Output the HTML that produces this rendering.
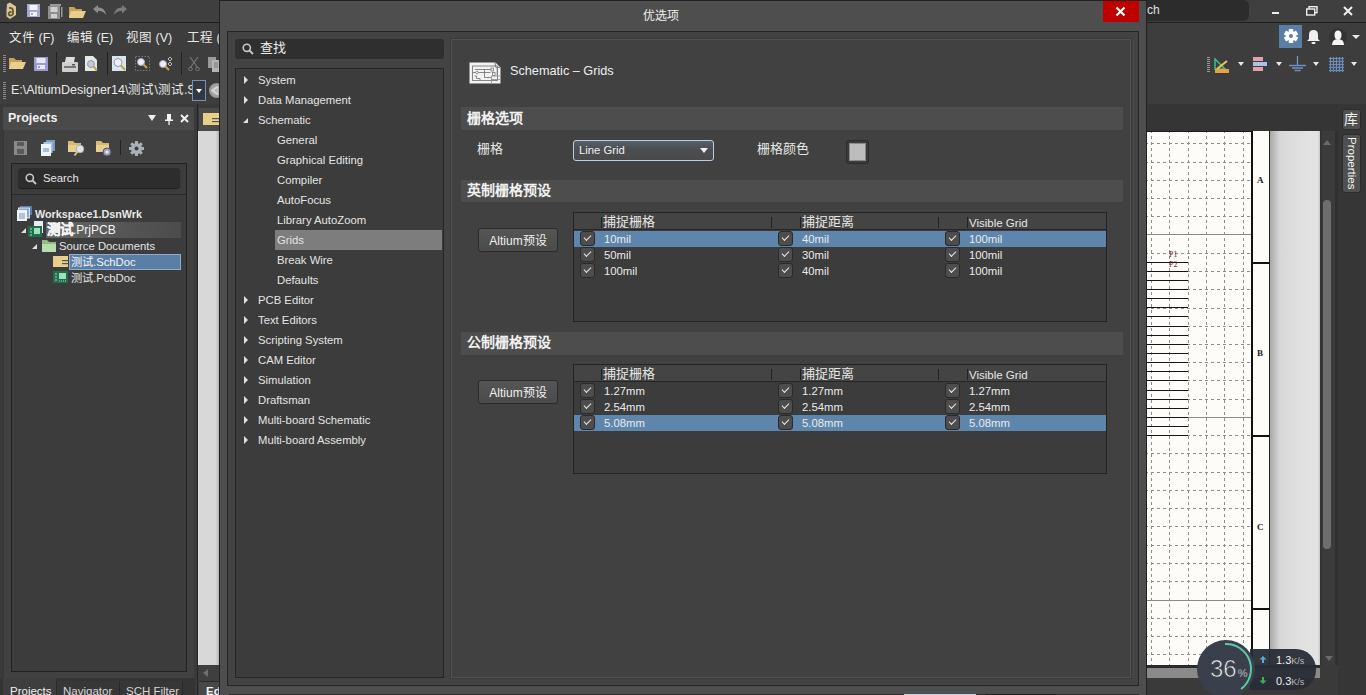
<!DOCTYPE html><html lang="zh-CN"><head><meta charset="utf-8"><style>
*{margin:0;padding:0;box-sizing:border-box}
html,body{width:1366px;height:695px;overflow:hidden;background:#3a3a3a;font-family:"Liberation Sans",sans-serif;color:#e8e8e8}
.a{position:absolute}
.t{position:absolute;white-space:nowrap;font-size:12px;line-height:14px}
.tri-r{width:0;height:0;border-top:4px solid transparent;border-bottom:4px solid transparent;border-left:4px solid #e0e0e0}
.tri-d{width:0;height:0;border-left:5px solid transparent;border-bottom:5px solid #e0e0e0}
.tr{font-size:11.3px;color:#e4e4e4}
.sec{position:absolute;left:461px;width:662px;height:23px;background:#4d4d4d}
.sect{position:absolute;left:467px;font-size:14px;font-weight:bold;color:#f2f2f2;line-height:16px;white-space:nowrap}
.btn{position:absolute;left:478px;width:80px;height:24px;background:linear-gradient(#555,#4a4a4a);border:1px solid #2c2c2c;border-radius:3px;font-size:12px;color:#f0f0f0;text-align:center;line-height:24px}
.tbl{position:absolute;left:573px;width:534px;height:110px;background:#3c3c3c;border:1px solid #232323}
.cb{position:absolute;width:15px;height:15px;background:#4d4d4d;border:1px solid #2a2a2a;border-radius:3px}
.cell{position:absolute;font-size:11.3px;color:#eaeaea;white-space:nowrap;line-height:14px}
.hd{position:absolute;font-size:13px;color:#e6e6e6;white-space:nowrap;line-height:16px}
.car{position:absolute;width:0;height:0;border-left:4px solid transparent;border-right:4px solid transparent;border-top:4px solid #e8e8e8}
</style></head><body>
<div class="a" style="left:0;top:0;width:1366px;height:22px;background:#3f3f3f"></div>
<div class="a" style="left:0;top:21.5px;width:1366px;height:1.5px;background:#1e1e1e"></div>
<div class="a" style="left:0;top:23px;width:1366px;height:81px;background:#3d3d3d"></div>
<svg class="a" style="left:5px;top:2px;" width="12" height="18" viewBox="0 0 12 18"><path d="M2 2 L5 0.5 L11 4.5 L11 13 L5 17 L1.5 14.5 L1.5 9 Z" fill="#d8c89c"/><path d="M4 6 Q8 5.5 8 9 L8 12 Q6 14.5 4 13 Q3 11 5 10 L6.5 10" fill="none" stroke="#6a5828" stroke-width="1.8"/></svg>
<svg class="a" style="left:27px;top:4px;" width="13" height="13" viewBox="0 0 13 13"><rect x="0" y="0" width="13" height="13" fill="#a8a8d6"/><rect x="2.5" y="1" width="8" height="5" fill="#f4f4ff"/><rect x="3" y="8" width="7" height="4" fill="#f4f4ff"/><rect x="4" y="9" width="2" height="2" fill="#a8a8d6"/></svg>
<svg class="a" style="left:48px;top:4px;" width="15" height="15" viewBox="0 0 15 15"><rect x="2" y="0" width="11" height="2" fill="#9a9a9a"/><rect x="0" y="2" width="12" height="13" fill="#8f8f8f"/><rect x="2.5" y="3" width="7" height="5" fill="#cfcfcf"/><rect x="3" y="10" width="6" height="4" fill="#cfcfcf"/><rect x="13" y="3" width="1.5" height="10" fill="#999"/></svg>
<svg class="a" style="left:69px;top:5px;" width="17" height="14" viewBox="0 0 17 14"><path d="M0 2 L5 2 L7 4 L13 4 L13 13 L0 13 Z" fill="#c7a35a"/><path d="M2 6 L17 6 L14 13 L0 13 Z" fill="#e9cf8a"/></svg>
<svg class="a" style="left:92px;top:5px;" width="15" height="11" viewBox="0 0 15 11"><path d="M1 4 L6 0 L6 2.5 Q13 2 14 10 Q11 5.5 6 6 L6 8.5 Z" fill="#8c8c8c"/></svg>
<svg class="a" style="left:113px;top:5px;" width="15" height="11" viewBox="0 0 15 11"><path d="M14 4 L9 0 L9 2.5 Q2 2 1 10 Q4 5.5 9 6 L9 8.5 Z" fill="#7a7a7a"/></svg>
<div class="t" style="left:9px;top:30.5px;font-size:12.5px;color:#e8e8e8">文件 (F)</div>
<div class="t" style="left:67px;top:30.5px;font-size:12.5px;color:#e8e8e8">编辑 (E)</div>
<div class="t" style="left:126px;top:30.5px;font-size:12.5px;color:#e8e8e8">视图 (V)</div>
<div class="t" style="left:187px;top:30.5px;font-size:12.5px;color:#e8e8e8">工程 (</div>
<div class="a" style="left:3px;top:55px;width:3px;height:1px;background:#8a8a8a"></div>
<div class="a" style="left:3px;top:57px;width:3px;height:1px;background:#8a8a8a"></div>
<div class="a" style="left:3px;top:59px;width:3px;height:1px;background:#8a8a8a"></div>
<div class="a" style="left:3px;top:61px;width:3px;height:1px;background:#8a8a8a"></div>
<div class="a" style="left:3px;top:63px;width:3px;height:1px;background:#8a8a8a"></div>
<div class="a" style="left:3px;top:65px;width:3px;height:1px;background:#8a8a8a"></div>
<div class="a" style="left:3px;top:67px;width:3px;height:1px;background:#8a8a8a"></div>
<div class="a" style="left:3px;top:69px;width:3px;height:1px;background:#8a8a8a"></div>
<div class="a" style="left:3px;top:71px;width:3px;height:1px;background:#8a8a8a"></div>
<svg class="a" style="left:9px;top:56px;" width="17" height="15" viewBox="0 0 17 15"><path d="M0 2 L5 2 L7 4 L13 4 L13 13 L0 13 Z" fill="#c7a35a"/><path d="M2 6 L17 6 L14 13 L0 13 Z" fill="#e9cf8a"/></svg>
<svg class="a" style="left:34px;top:57px;" width="14" height="14" viewBox="0 0 14 14"><rect x="0" y="0" width="14" height="14" fill="#9a9ad0"/><rect x="2.5" y="1" width="9" height="5" fill="#e8e8f8"/><rect x="3" y="8" width="8" height="4" fill="#e8e8f8"/><rect x="4" y="9" width="2" height="2" fill="#9a9ad0"/></svg>
<div class="a" style="left:56px;top:52px;width:1px;height:23px;background:#222"></div>
<svg class="a" style="left:62px;top:57px;" width="16" height="15" viewBox="0 0 16 15"><path d="M4 0 L13 0 L12 5 L3 5 Z" fill="#ddd"/><rect x="0" y="5" width="16" height="10" rx="1" fill="#cfcfcf"/><rect x="2" y="9" width="12" height="2" fill="#777"/><rect x="10" y="7" width="3" height="1.5" fill="#555"/></svg>
<svg class="a" style="left:85px;top:56px;" width="13" height="16" viewBox="0 0 13 16"><path d="M0 0 L8 0 L12 4 L12 15 L0 15 Z" fill="#e8e8e8"/><circle cx="6" cy="8" r="3.5" fill="#bcd" stroke="#999"/><path d="M8.5 10.5 L12 14.5" stroke="#c9a050" stroke-width="2"/></svg>
<div class="a" style="left:107px;top:52px;width:1px;height:23px;background:#222"></div>
<svg class="a" style="left:112px;top:56px;" width="16" height="16" viewBox="0 0 16 16"><rect x="0" y="0" width="14" height="15" fill="#d8e6f2"/><circle cx="6" cy="6.5" r="4" fill="#eef" stroke="#999"/><path d="M9 9.5 L13 14" stroke="#c9a050" stroke-width="2"/></svg>
<svg class="a" style="left:135px;top:56px;" width="15" height="16" viewBox="0 0 15 16"><rect x="0.5" y="0.5" width="14" height="14" fill="none" stroke="#777" stroke-dasharray="1.5 1.5"/><circle cx="6" cy="6" r="3.5" fill="#eef" stroke="#aaa"/><path d="M8.5 8.5 L12 12" stroke="#c9a050" stroke-width="2"/></svg>
<svg class="a" style="left:158px;top:56px;" width="16" height="16" viewBox="0 0 16 16"><circle cx="5" cy="8" r="3.5" fill="#eef" stroke="#aaa"/><path d="M7.5 10.5 L11 14" stroke="#c9a050" stroke-width="2"/><path d="M12 1 l2 2 l-2 2 l-2 -2 Z M12 6 l2 2 l-2 2 l-2 -2 Z" fill="none" stroke="#ddd" stroke-width="0.8"/></svg>
<div class="a" style="left:181px;top:52px;width:1px;height:23px;background:#222"></div>
<svg class="a" style="left:188px;top:57px;" width="13" height="14" viewBox="0 0 13 14"><path d="M2 0 L10 11 M10 0 L2 11" stroke="#777" stroke-width="1.2"/><circle cx="2.5" cy="12" r="1.8" fill="none" stroke="#777"/><circle cx="9.5" cy="12" r="1.8" fill="none" stroke="#777"/></svg>
<svg class="a" style="left:208px;top:57px;" width="12" height="15" viewBox="0 0 12 15"><rect x="0" y="0" width="8" height="11" fill="#9a9a9a"/><rect x="4" y="3" width="8" height="12" fill="#b5b5b5"/><path d="M6 6 h4 M6 8 h4 M6 10 h4" stroke="#777"/></svg>
<div class="a" style="left:3px;top:82px;width:3px;height:1px;background:#8a8a8a"></div>
<div class="a" style="left:3px;top:84px;width:3px;height:1px;background:#8a8a8a"></div>
<div class="a" style="left:3px;top:86px;width:3px;height:1px;background:#8a8a8a"></div>
<div class="a" style="left:3px;top:88px;width:3px;height:1px;background:#8a8a8a"></div>
<div class="a" style="left:3px;top:90px;width:3px;height:1px;background:#8a8a8a"></div>
<div class="a" style="left:3px;top:92px;width:3px;height:1px;background:#8a8a8a"></div>
<div class="a" style="left:3px;top:94px;width:3px;height:1px;background:#8a8a8a"></div>
<div class="a" style="left:3px;top:96px;width:3px;height:1px;background:#8a8a8a"></div>
<div class="a" style="left:3px;top:98px;width:3px;height:1px;background:#8a8a8a"></div>
<div class="t" style="left:11px;top:83px;font-size:12.5px;color:#e6e6e6">E:\AltiumDesigner14\测试\测试.S</div>
<div class="a" style="left:192px;top:80px;width:14px;height:21px;background:#323842;border:1px solid #7592b0"></div>
<div class="car" style="left:196px;top:89px;border-left-width:3.5px;border-right-width:3.5px;border-top-width:4px;border-top-color:#fff"></div>
<div class="a" style="left:209px;top:83px;width:15px;height:15px;border-radius:50%;background:radial-gradient(circle,#b8b8b8 20%,#9a9a9a 60%,#7a7a7a)"></div>
<svg class="a" style="left:211px;top:86px;" width="8" height="9" viewBox="0 0 8 9"><path d="M7 0.5 L1 4.5 L7 8.5" fill="none" stroke="#d8d8d8" stroke-width="1.6"/></svg>
<div class="a" style="left:0;top:104px;width:197px;height:591px;background:#3a3a3a"></div>
<div class="a" style="left:3px;top:107px;width:191px;height:23px;background:#4a4a4a"></div>
<div class="t" style="left:8px;top:111px;font-size:12.5px;font-weight:bold;color:#f0f0f0">Projects</div>
<div class="car" style="left:148px;top:115px;border-left-width:4px;border-right-width:4px;border-top-width:6px;border-top-color:#eee"></div>
<svg class="a" style="left:165px;top:114px;" width="8" height="11" viewBox="0 0 8 11"><rect x="2" y="0" width="4" height="6" fill="#f4f4f4"/><rect x="0" y="5.5" width="8" height="1.5" fill="#f4f4f4"/><rect x="3.4" y="7" width="1.3" height="4" fill="#f4f4f4"/></svg>
<svg class="a" style="left:180px;top:114px;" width="9" height="9" viewBox="0 0 9 9"><path d="M1 1 L8 8 M8 1 L1 8" stroke="#f0f0f0" stroke-width="2"/></svg>
<div class="a" style="left:3px;top:130px;width:191px;height:551px;background:#414141;border-left:1px solid #353535"></div>
<svg class="a" style="left:14px;top:141px;" width="13" height="14" viewBox="0 0 13 14"><rect x="0" y="0" width="13" height="14" fill="#8a8a8a"/><rect x="3" y="1" width="7" height="4" fill="#5a5a5a"/><rect x="3" y="8" width="7" height="5" fill="#5a5a5a"/></svg>
<svg class="a" style="left:41px;top:140px;" width="15" height="16" viewBox="0 0 15 16"><rect x="5" y="0" width="9" height="11" fill="#7a9ac0"/><rect x="2.5" y="2" width="9" height="11" fill="#aac4e0"/><rect x="0" y="4" width="10" height="12" fill="#eef3fa"/><path d="M2 9 h6 M2 11 h6" stroke="#6b8ab0"/></svg>
<svg class="a" style="left:68px;top:140px;" width="17" height="17" viewBox="0 0 17 17"><path d="M0 1 L5 1 L7 3 L13 3 L13 12 L0 12 Z" fill="#d7b870"/><path d="M0 5 L13 5 L13 12 L0 12 Z" fill="#e8cf8f"/><circle cx="12" cy="9" r="3.8" fill="#dfe6ee" stroke="#aaa"/><path d="M9.5 11.5 L6.5 15.5" stroke="#d6c08a" stroke-width="2"/></svg>
<svg class="a" style="left:96px;top:140px;" width="17" height="17" viewBox="0 0 17 17"><path d="M0 1 L5 1 L7 3 L13 3 L13 12 L0 12 Z" fill="#d7b870"/><path d="M0 5 L13 5 L13 12 L0 12 Z" fill="#e8cf8f"/><circle cx="11" cy="12" r="4" fill="#9aa8bb" stroke="#556"/><circle cx="11" cy="12" r="1.5" fill="#eee"/></svg>
<div class="a" style="left:120px;top:140px;width:1px;height:15px;background:#222"></div>
<svg class="a" style="left:129px;top:141px;" width="15" height="15" viewBox="0 0 15 15"><g transform="translate(7.5,7.5)"><circle r="5.5" fill="#aab0b8"/><rect x="-1.5" y="-7.5" width="3" height="4" fill="#aab0b8" transform="rotate(0)"/><rect x="-1.5" y="-7.5" width="3" height="4" fill="#aab0b8" transform="rotate(45)"/><rect x="-1.5" y="-7.5" width="3" height="4" fill="#aab0b8" transform="rotate(90)"/><rect x="-1.5" y="-7.5" width="3" height="4" fill="#aab0b8" transform="rotate(135)"/><rect x="-1.5" y="-7.5" width="3" height="4" fill="#aab0b8" transform="rotate(180)"/><rect x="-1.5" y="-7.5" width="3" height="4" fill="#aab0b8" transform="rotate(225)"/><rect x="-1.5" y="-7.5" width="3" height="4" fill="#aab0b8" transform="rotate(270)"/><rect x="-1.5" y="-7.5" width="3" height="4" fill="#aab0b8" transform="rotate(315)"/><circle r="2" fill="#3e3e3e"/></g></svg>
<div class="a" style="left:11px;top:163px;width:176px;height:509px;background:#3c3c3c;border:1px solid #222"></div>
<div class="a" style="left:18px;top:168px;width:162px;height:20px;background:#2d2d2d;border-radius:4px;box-shadow:0 1px 1px #1e1e1e"></div>
<svg class="a" style="left:25px;top:173px;" width="12" height="12" viewBox="0 0 12 12"><circle cx="4.8" cy="4.8" r="3.6" fill="none" stroke="#c8c8c8" stroke-width="1.6"/><path d="M7.5 7.5 L11 11" stroke="#c8c8c8" stroke-width="1.8"/></svg>
<div class="t" style="left:43px;top:171px;font-size:11.3px;color:#e6e6e6">Search</div>
<div class="a" style="left:12px;top:194px;width:174px;height:1px;background:#2a2a2a"></div>
<svg class="a" style="left:17px;top:206px;" width="15" height="15" viewBox="0 0 15 15"><rect x="3" y="0" width="12" height="9" fill="#5b7fb0"/><rect x="1.5" y="2" width="11" height="10" fill="#8aaad6" stroke="#dde"/><rect x="0" y="4" width="10" height="11" fill="#eef3fb"/><path d="M2 8 h6 M2 10 h6 M2 12 h6" stroke="#7a8fb0"/></svg>
<div class="t" style="left:35px;top:207px;font-size:10.8px;font-weight:bold;color:#e8e8e8">Workspace1.DsnWrk</div>
<div class="a" style="left:46px;top:222px;width:135px;height:16px;background:linear-gradient(90deg,#666,#555 60%,#4c4c4c)"></div>
<div class="a tri-d" style="left:21px;top:228px"></div>
<svg class="a" style="left:28px;top:221px;" width="17" height="17" viewBox="0 0 17 17"><rect x="6" y="0" width="9" height="12" fill="#e8eef5"/><rect x="0" y="5" width="14" height="11" fill="#1f6f4a"/><path d="M2 8 h2 M2 11 h2 M2 14 h2" stroke="#ccc"/><rect x="6" y="7" width="6" height="6" fill="#9fe0c0"/></svg>
<div class="t" style="left:47px;top:223px;font-size:12px;color:#f4f4f4"><b style="font-size:13.5px;-webkit-text-stroke:0.3px #f4f4f4">测试</b>.PrjPCB</div>
<div class="a tri-d" style="left:32px;top:244px"></div>
<svg class="a" style="left:42px;top:239px;" width="15" height="14" viewBox="0 0 15 14"><path d="M0 1 L5 1 L7 3 L14 3 L14 13 L0 13 Z" fill="#8fbf80"/><path d="M0 5 L14 5 L14 13 L0 13 Z" fill="#b8deb0"/></svg>
<div class="t" style="left:59px;top:239px;font-size:11.3px;color:#e4e4e4">Source Documents</div>
<svg class="a" style="left:53px;top:256px;" width="15" height="11" viewBox="0 0 15 11"><rect x="0" y="0" width="15" height="11" fill="#e8d08a"/><rect x="9" y="4" width="6" height="1.2" fill="#555"/><rect x="9" y="7" width="6" height="1.2" fill="#555"/></svg>
<div class="a" style="left:69px;top:254px;width:112px;height:16px;background:#5a7fa6;border:1px solid #93acc5"></div>
<div class="t" style="left:71px;top:255px;font-size:11.3px;color:#f4f4f4">测试.SchDoc</div>
<svg class="a" style="left:53px;top:271px;" width="15" height="12" viewBox="0 0 15 12"><rect x="0" y="0" width="15" height="12" fill="#1f6f4a"/><path d="M2 3 h2 M2 6 h2 M2 9 h2" stroke="#ccc"/><rect x="6" y="2" width="7" height="6" fill="#9fe0c0"/><path d="M6 10 h7" stroke="#9fe0c0" stroke-dasharray="1 1"/></svg>
<div class="t" style="left:71px;top:271px;font-size:11.3px;color:#e4e4e4">测试.PcbDoc</div>
<div class="a" style="left:0;top:678px;width:197px;height:17px;background:#343434"></div>
<div class="a" style="left:3px;top:678px;width:53px;height:17px;background:#3e3e3e"></div>
<div class="a" style="left:56px;top:681px;width:63px;height:14px;background:#373737;border-left:1px solid #2a2a2a"></div>
<div class="a" style="left:119px;top:681px;width:64px;height:14px;background:#373737;border-left:1px solid #2a2a2a;border-right:1px solid #2a2a2a"></div>
<div class="t" style="left:10px;top:684px;font-size:11.5px;color:#f0f0f0">Projects</div>
<div class="t" style="left:63px;top:684px;font-size:11.5px;color:#d8d8d8">Navigator</div>
<div class="t" style="left:126px;top:684px;font-size:11.5px;color:#d8d8d8">SCH Filter</div>
<div class="a" style="left:195px;top:104px;width:24px;height:591px;background:#3a3a3a"></div><div class="a" style="left:197px;top:104px;width:1px;height:591px;background:#262626"></div>
<div class="a" style="left:199px;top:108px;width:20px;height:23px;background:#4a4a4a"></div>
<svg class="a" style="left:203px;top:113px;" width="16" height="12" viewBox="0 0 16 12"><rect x="0" y="0" width="16" height="12" fill="#e8d08a"/><rect x="9" y="5" width="7" height="1.2" fill="#555"/><rect x="9" y="8" width="7" height="1.2" fill="#555"/></svg>
<div class="a" style="left:198px;top:131px;width:21px;height:534px;background:linear-gradient(90deg,#e0e0e0,#d8d8d8 10%,#d8d8d8 85%,#b0b0b0)"></div>
<div class="a" style="left:198px;top:665px;width:21px;height:16px;background:#3f3f3f"></div>
<div class="a" style="left:203px;top:669px;width:0;height:0;border-top:4.5px solid transparent;border-bottom:4.5px solid transparent;border-right:5px solid #6e6e6e"></div>
<div class="a" style="left:199px;top:681px;width:20px;height:14px;background:#484848;border-top:1px solid #2a2a2a"></div>
<div class="t" style="left:206px;top:684px;font-size:11.5px;font-weight:bold;color:#f4f4f4">Edi</div>
<div class="a" style="left:1147px;top:0;width:102px;height:21px;background:#2c2c2c;border-radius:0 6px 6px 0"></div>
<div class="t" style="left:1143px;top:3px;font-size:12px;color:#e0e0e0">rch</div>
<svg class="a" style="left:1272px;top:11px;" width="8" height="4" viewBox="0 0 8 4"><rect x="0" y="1" width="7" height="2" fill="#eee"/></svg>
<svg class="a" style="left:1306px;top:6px;" width="12" height="10" viewBox="0 0 12 10"><rect x="3" y="0.7" width="8" height="6" fill="none" stroke="#eee" stroke-width="1.4"/><rect x="0.7" y="3" width="8" height="6" fill="#3b3b3b" stroke="#eee" stroke-width="1.4"/></svg>
<svg class="a" style="left:1343px;top:6px;" width="10" height="10" viewBox="0 0 10 10"><path d="M1 1 L9 9 M9 1 L1 9" stroke="#f0f0f0" stroke-width="2"/></svg>
<div class="a" style="left:1279px;top:25px;width:23px;height:23px;background:#5b7ea6"></div>
<svg class="a" style="left:1284px;top:29px;" width="14" height="14" viewBox="0 0 14 14"><g transform="translate(7,7)"><rect x="-2.2" y="-7" width="4.4" height="4" fill="#fff" transform="rotate(0)"/><rect x="-2.2" y="-7" width="4.4" height="4" fill="#fff" transform="rotate(60)"/><rect x="-2.2" y="-7" width="4.4" height="4" fill="#fff" transform="rotate(120)"/><rect x="-2.2" y="-7" width="4.4" height="4" fill="#fff" transform="rotate(180)"/><rect x="-2.2" y="-7" width="4.4" height="4" fill="#fff" transform="rotate(240)"/><rect x="-2.2" y="-7" width="4.4" height="4" fill="#fff" transform="rotate(300)"/><circle r="5" fill="#fff"/><circle r="2" fill="#5b7ea6"/></g></svg>
<svg class="a" style="left:1307px;top:29px;" width="13" height="15" viewBox="0 0 13 15"><path d="M6.5 1 Q11 1 11 6 L11 10 L13 12 L0 12 L2 10 L2 6 Q2 1 6.5 1 Z" fill="#f0f0f0"/><rect x="4.5" y="13" width="4" height="2" rx="1" fill="#f0f0f0"/></svg>
<svg class="a" style="left:1329px;top:27px;" width="18" height="20" viewBox="0 0 18 20"><circle cx="9" cy="10" r="9" fill="#333"/><ellipse cx="9" cy="8" rx="3.5" ry="4.5" fill="#f4f4f4"/><path d="M3 18 Q3 12 9 12 Q15 12 15 18 Z" fill="#f4f4f4"/></svg>
<div class="car" style="left:1352px;top:35px"></div>
<div class="a" style="left:1207px;top:57px;width:3px;height:1px;background:#999"></div>
<div class="a" style="left:1207px;top:59px;width:3px;height:1px;background:#999"></div>
<div class="a" style="left:1207px;top:61px;width:3px;height:1px;background:#999"></div>
<div class="a" style="left:1207px;top:63px;width:3px;height:1px;background:#999"></div>
<div class="a" style="left:1207px;top:65px;width:3px;height:1px;background:#999"></div>
<div class="a" style="left:1207px;top:67px;width:3px;height:1px;background:#999"></div>
<div class="a" style="left:1207px;top:69px;width:3px;height:1px;background:#999"></div>
<div class="a" style="left:1207px;top:71px;width:3px;height:1px;background:#999"></div>
<svg class="a" style="left:1214px;top:57px;" width="16" height="16" viewBox="0 0 16 16"><path d="M1 2 L1 12 L11 12 Z" fill="none" stroke="#3ac08a" stroke-width="1.5"/><path d="M3 12 L13 4" stroke="#e8c060" stroke-width="2.2"/><rect x="1" y="12" width="14" height="4" fill="#e8a040"/></svg>
<div class="car" style="left:1238px;top:62px;border-left-width:3px;border-right-width:3px"></div>
<svg class="a" style="left:1253px;top:57px;" width="14" height="14" viewBox="0 0 14 14"><rect x="0" y="0" width="10" height="4" fill="#e5a0a8"/><rect x="0" y="5" width="14" height="4" fill="#a8c4e8"/><rect x="0" y="10" width="10" height="4" fill="#e5a0a8"/></svg>
<div class="car" style="left:1276px;top:62px;border-left-width:3px;border-right-width:3px"></div>
<svg class="a" style="left:1289px;top:56px;" width="17" height="16" viewBox="0 0 17 16"><path d="M8.5 0 V9" stroke="#7a9ac0" stroke-width="1.2"/><path d="M0 9.5 H17 M3 12 H14 M5.5 14.5 H11.5" stroke="#6e8fbf" stroke-width="1.4"/></svg>
<div class="car" style="left:1313px;top:62px;border-left-width:3px;border-right-width:3px"></div>
<svg class="a" style="left:1329px;top:57px;" width="15" height="15" viewBox="0 0 15 15"><path d="M1.5 0 V15" stroke="#6a8ab8" stroke-width="1.2"/><path d="M4.5 0 V15" stroke="#6a8ab8" stroke-width="1.2"/><path d="M7.5 0 V15" stroke="#6a8ab8" stroke-width="1.2"/><path d="M10.5 0 V15" stroke="#6a8ab8" stroke-width="1.2"/><path d="M13.5 0 V15" stroke="#6a8ab8" stroke-width="1.2"/><path d="M0 1.5 H15" stroke="#6a8ab8" stroke-width="1.2"/><path d="M0 4.5 H15" stroke="#6a8ab8" stroke-width="1.2"/><path d="M0 7.5 H15" stroke="#6a8ab8" stroke-width="1.2"/><path d="M0 10.5 H15" stroke="#6a8ab8" stroke-width="1.2"/><path d="M0 13.5 H15" stroke="#6a8ab8" stroke-width="1.2"/></svg>
<div class="car" style="left:1351px;top:62px;border-left-width:3px;border-right-width:3px"></div>
<div class="a" style="left:1146px;top:104px;width:192px;height:27px;background:#353535"></div>
<div class="a" style="left:1338px;top:104px;width:28px;height:591px;background:#363636"></div>
<div class="a" style="left:1342px;top:109px;width:19px;height:21px;background:#505050;border-radius:3px;border:1px solid #2c2c2c"></div>
<div class="t" style="left:1344px;top:111px;font-size:14px;line-height:16px;color:#f0f0f0">库</div>
<div class="a" style="left:1342px;top:134px;width:19px;height:59px;background:#505050;border-radius:3px;border:1px solid #2c2c2c"></div>
<div class="t" style="left:1345px;top:137px;font-size:11.5px;line-height:13px;color:#f4f4f4;writing-mode:vertical-rl">Properties</div>
<div class="a" style="left:1146px;top:131px;width:106px;height:534px;background:#fdfcf9"></div>
<svg class="a" style="left:1146px;top:131px;shape-rendering:crispEdges" width="106" height="534" viewBox="0 0 106 534"><path d="M5.5 0 V534" stroke="#8e8e8e" stroke-width="1" stroke-dasharray="3 3" stroke-dashoffset="1"/><path d="M23.5 0 V534" stroke="#8e8e8e" stroke-width="1" stroke-dasharray="3 3" stroke-dashoffset="1"/><path d="M42.5 0 V534" stroke="#8e8e8e" stroke-width="1" stroke-dasharray="3 3" stroke-dashoffset="1"/><path d="M60.5 0 V534" stroke="#8e8e8e" stroke-width="1" stroke-dasharray="3 3" stroke-dashoffset="1"/><path d="M78.5 0 V534" stroke="#8e8e8e" stroke-width="1" stroke-dasharray="3 3" stroke-dashoffset="1"/><path d="M97.5 0 V534" stroke="#8e8e8e" stroke-width="1" stroke-dasharray="3 3" stroke-dashoffset="1"/><path d="M0 12.5 H105" stroke="#8e8e8e" stroke-width="1" stroke-dasharray="3 3" stroke-dashoffset="1"/><path d="M0 31.5 H105" stroke="#8e8e8e" stroke-width="1" stroke-dasharray="3 3" stroke-dashoffset="1"/><path d="M0 49.5 H105" stroke="#8e8e8e" stroke-width="1" stroke-dasharray="3 3" stroke-dashoffset="1"/><path d="M0 67.5 H105" stroke="#8e8e8e" stroke-width="1" stroke-dasharray="3 3" stroke-dashoffset="1"/><path d="M0 85.5 H105" stroke="#8e8e8e" stroke-width="1" stroke-dasharray="3 3" stroke-dashoffset="1"/><path d="M0 122.5 H105" stroke="#8e8e8e" stroke-width="1" stroke-dasharray="3 3" stroke-dashoffset="1"/><path d="M0 140.5 H105" stroke="#8e8e8e" stroke-width="1" stroke-dasharray="3 3" stroke-dashoffset="1"/><path d="M0 158.5 H105" stroke="#8e8e8e" stroke-width="1" stroke-dasharray="3 3" stroke-dashoffset="1"/><path d="M0 177.5 H105" stroke="#8e8e8e" stroke-width="1" stroke-dasharray="3 3" stroke-dashoffset="1"/><path d="M0 195.5 H105" stroke="#8e8e8e" stroke-width="1" stroke-dasharray="3 3" stroke-dashoffset="1"/><path d="M0 213.5 H105" stroke="#8e8e8e" stroke-width="1" stroke-dasharray="3 3" stroke-dashoffset="1"/><path d="M0 231.5 H105" stroke="#8e8e8e" stroke-width="1" stroke-dasharray="3 3" stroke-dashoffset="1"/><path d="M0 249.5 H105" stroke="#8e8e8e" stroke-width="1" stroke-dasharray="3 3" stroke-dashoffset="1"/><path d="M0 268.5 H105" stroke="#8e8e8e" stroke-width="1" stroke-dasharray="3 3" stroke-dashoffset="1"/><path d="M0 304.5 H105" stroke="#8e8e8e" stroke-width="1" stroke-dasharray="3 3" stroke-dashoffset="1"/><path d="M0 322.5 H105" stroke="#8e8e8e" stroke-width="1" stroke-dasharray="3 3" stroke-dashoffset="1"/><path d="M0 341.5 H105" stroke="#8e8e8e" stroke-width="1" stroke-dasharray="3 3" stroke-dashoffset="1"/><path d="M0 359.5 H105" stroke="#8e8e8e" stroke-width="1" stroke-dasharray="3 3" stroke-dashoffset="1"/><path d="M0 377.5 H105" stroke="#8e8e8e" stroke-width="1" stroke-dasharray="3 3" stroke-dashoffset="1"/><path d="M0 395.5 H105" stroke="#8e8e8e" stroke-width="1" stroke-dasharray="3 3" stroke-dashoffset="1"/><path d="M0 414.5 H105" stroke="#8e8e8e" stroke-width="1" stroke-dasharray="3 3" stroke-dashoffset="1"/><path d="M0 432.5 H105" stroke="#8e8e8e" stroke-width="1" stroke-dasharray="3 3" stroke-dashoffset="1"/><path d="M0 450.5 H105" stroke="#8e8e8e" stroke-width="1" stroke-dasharray="3 3" stroke-dashoffset="1"/><path d="M0 487.5 H105" stroke="#8e8e8e" stroke-width="1" stroke-dasharray="3 3" stroke-dashoffset="1"/><path d="M0 505.5 H105" stroke="#8e8e8e" stroke-width="1" stroke-dasharray="3 3" stroke-dashoffset="1"/><path d="M0 523.5 H105" stroke="#8e8e8e" stroke-width="1" stroke-dasharray="3 3" stroke-dashoffset="1"/><rect x="0" y="103" width="105" height="1" fill="#8a8a8a"/><rect x="0" y="286" width="105" height="1" fill="#8a8a8a"/><rect x="0" y="469" width="105" height="1" fill="#8a8a8a"/><rect x="0" y="131" width="42" height="1.4" fill="#14141c"/><rect x="0" y="140" width="42" height="1.4" fill="#14141c"/><rect x="0" y="149" width="42" height="1.4" fill="#14141c"/><rect x="0" y="158" width="42" height="1.4" fill="#14141c"/><rect x="0" y="167" width="42" height="1.4" fill="#14141c"/><rect x="0" y="176" width="42" height="1.4" fill="#14141c"/><rect x="0" y="185" width="42" height="1.4" fill="#14141c"/><rect x="0" y="195" width="42" height="1.4" fill="#14141c"/><rect x="0" y="204" width="42" height="1.4" fill="#14141c"/><rect x="0" y="213" width="42" height="1.4" fill="#14141c"/><rect x="0" y="222" width="42" height="1.4" fill="#14141c"/><rect x="0" y="231" width="42" height="1.4" fill="#14141c"/><rect x="0" y="240" width="42" height="1.4" fill="#14141c"/><rect x="0" y="249" width="42" height="1.4" fill="#14141c"/><rect x="0" y="259" width="42" height="1.4" fill="#14141c"/><rect x="0" y="268" width="42" height="1.4" fill="#14141c"/><rect x="0" y="277" width="42" height="1.4" fill="#14141c"/><rect x="0" y="286" width="42" height="1.4" fill="#14141c"/><rect x="0" y="295" width="42" height="1.4" fill="#14141c"/><rect x="0" y="304" width="42" height="1.4" fill="#14141c"/><text x="23" y="126" font-family="Liberation Serif" font-size="8" fill="#6a2828">P1</text><text x="23" y="136" font-family="Liberation Serif" font-size="8" fill="#6a2828">P2</text><rect x="0" y="0" width="106" height="1" fill="#1a1a1a"/></svg>
<div class="a" style="left:1251px;top:131px;width:2px;height:534px;background:#111"></div>
<div class="a" style="left:1253px;top:131px;width:17px;height:534px;background:#fdfcf9;border-right:1px solid #222"></div>
<div class="a" style="left:1253px;top:262px;width:17px;height:2px;background:#111"></div>
<div class="a" style="left:1253px;top:435px;width:17px;height:2px;background:#111"></div>
<div class="a" style="left:1253px;top:608px;width:17px;height:2px;background:#111"></div>
<div class="t" style="left:1257px;top:173px;font-size:9px;font-family:Liberation Serif;color:#222;font-weight:bold">A</div>
<div class="t" style="left:1257px;top:346px;font-size:9px;font-family:Liberation Serif;color:#222;font-weight:bold">B</div>
<div class="t" style="left:1257px;top:520px;font-size:9px;font-family:Liberation Serif;color:#222;font-weight:bold">C</div>
<div class="a" style="left:1270px;top:131px;width:50px;height:534px;background:linear-gradient(90deg,#a8a8a8,#d8d8d8 20%,#e0e0e0 60%,#e4e4e4 95%,#c8c8c8)"></div>
<div class="a" style="left:1320px;top:131px;width:18px;height:534px;background:#3b3b3b;border-left:2px solid #333;border-right:3px solid #303030"></div>
<div class="a" style="left:1323px;top:140px;width:0;height:0;border-left:4px solid transparent;border-right:4px solid transparent;border-bottom:5px solid #6a6a6a"></div>
<div class="a" style="left:1323px;top:200px;width:8px;height:349px;background:#6e6e6e;border-radius:4px"></div>
<div class="a" style="left:1325px;top:656px;width:0;height:0;border-left:4px solid transparent;border-right:4px solid transparent;border-top:5px solid #6a6a6a"></div>
<div class="a" style="left:1146px;top:665px;width:174px;height:3px;background:#2a2a2a"></div>
<div class="a" style="left:1146px;top:668px;width:174px;height:10px;background:#8a8a8a"></div>
<div class="a" style="left:1146px;top:678px;width:192px;height:17px;background:#3a3a3a"></div>
<div class="a" style="left:1250px;top:649px;width:66px;height:41px;background:rgba(40,44,54,0.95);border-radius:0 20px 20px 0"></div>
<svg class="a" style="left:1259px;top:656px;" width="8" height="7" viewBox="0 0 8 7"><path d="M4 0 L7.5 3.5 L5 3.5 L5 7 L3 7 L3 3.5 L0.5 3.5 Z" fill="#5aa8e0"/></svg>
<svg class="a" style="left:1259px;top:677px;" width="8" height="7" viewBox="0 0 8 7"><path d="M4 7 L7.5 3.5 L5 3.5 L5 0 L3 0 L3 3.5 L0.5 3.5 Z" fill="#3ab050"/></svg>
<div class="t" style="left:1276px;top:653px;font-size:11px;color:#f0f0f0">1.3<span style="font-size:9px;color:#bbb">K/s</span></div>
<div class="t" style="left:1276px;top:674px;font-size:11px;color:#f0f0f0">0.3<span style="font-size:9px;color:#bbb">K/s</span></div>
<div class="a" style="left:1197px;top:640px;width:58px;height:58px;border-radius:50%;background:#3a3f4c"></div>
<svg class="a" style="left:1197px;top:640px;" width="58" height="58" viewBox="0 0 58 58"><path d="M 28 4 A 25 25 0 0 1 44 49" fill="none" stroke="#5ccaa8" stroke-width="2"/></svg>
<div class="t" style="left:1210px;top:656px;font-size:24px;line-height:26px;color:#f4f4f4;-webkit-text-stroke:0.7px #3a3f4c">36<span style="font-size:11px;margin-left:1px;-webkit-text-stroke:0.3px #3a3f4c">%</span></div>
<div class="a" style="left:219px;top:0;width:928px;height:695px;background:#4e4e4e;border-left:1px solid #222;border-right:1px solid #222;border-top:1px solid #222"></div>
<div class="t" style="left:643px;top:9px;font-size:12px;color:#f0f0f0">优选项</div>
<div class="a" style="left:1103px;top:1px;width:36px;height:21px;background:#c00000"></div>
<svg class="a" style="left:1115px;top:6px;" width="11" height="11" viewBox="0 0 11 11"><path d="M1.5 1.5 L9.5 9.5 M9.5 1.5 L1.5 9.5" stroke="#fff" stroke-width="2.2"/></svg>
<div class="a" style="left:227px;top:31px;width:912px;height:655px;background:#434343;border:1px solid #262626"></div>
<div class="a" style="left:229px;top:694px;width:910px;height:1px;background:#2e2e2e"></div>
<div class="a" style="left:904px;top:694px;width:72px;height:1px;background:#c8ccd4"></div>
<div class="a" style="left:986px;top:694px;width:70px;height:1px;background:#1e1e1e"></div>
<div class="a" style="left:235px;top:39px;width:209px;height:20px;background:#2f2f2f;border-radius:3px"></div>
<svg class="a" style="left:242px;top:43px;" width="12" height="12" viewBox="0 0 12 12"><circle cx="4.8" cy="4.8" r="3.6" fill="none" stroke="#c8c8c8" stroke-width="1.6"/><path d="M7.5 7.5 L11 11" stroke="#c8c8c8" stroke-width="1.8"/></svg>
<div class="t" style="left:260px;top:41px;font-size:13px;color:#ececec">查找</div>
<div class="a" style="left:235px;top:68px;width:209px;height:610px;background:#3c3c3c;border:1px solid #262626"></div>
<div class="a tri-r" style="left:244px;top:76px"></div>
<div class="t tr" style="left:258px;top:73px">System</div>
<div class="a tri-r" style="left:244px;top:96px"></div>
<div class="t tr" style="left:258px;top:93px">Data Management</div>
<div class="a tri-d" style="left:243px;top:118px"></div>
<div class="t tr" style="left:258px;top:113px">Schematic</div>
<div class="t tr" style="left:277px;top:133px">General</div>
<div class="t tr" style="left:277px;top:153px">Graphical Editing</div>
<div class="t tr" style="left:277px;top:173px">Compiler</div>
<div class="t tr" style="left:277px;top:193px">AutoFocus</div>
<div class="t tr" style="left:277px;top:213px">Library AutoZoom</div>
<div class="a" style="left:275px;top:230px;width:167px;height:20px;background:#7d7d7d"></div>
<div class="t tr" style="left:277px;top:233px">Grids</div>
<div class="t tr" style="left:277px;top:253px">Break Wire</div>
<div class="t tr" style="left:277px;top:273px">Defaults</div>
<div class="a tri-r" style="left:244px;top:296px"></div>
<div class="t tr" style="left:258px;top:293px">PCB Editor</div>
<div class="a tri-r" style="left:244px;top:316px"></div>
<div class="t tr" style="left:258px;top:313px">Text Editors</div>
<div class="a tri-r" style="left:244px;top:336px"></div>
<div class="t tr" style="left:258px;top:333px">Scripting System</div>
<div class="a tri-r" style="left:244px;top:356px"></div>
<div class="t tr" style="left:258px;top:353px">CAM Editor</div>
<div class="a tri-r" style="left:244px;top:376px"></div>
<div class="t tr" style="left:258px;top:373px">Simulation</div>
<div class="a tri-r" style="left:244px;top:396px"></div>
<div class="t tr" style="left:258px;top:393px">Draftsman</div>
<div class="a tri-r" style="left:244px;top:416px"></div>
<div class="t tr" style="left:258px;top:413px">Multi-board Schematic</div>
<div class="a tri-r" style="left:244px;top:436px"></div>
<div class="t tr" style="left:258px;top:433px">Multi-board Assembly</div>
<div class="a" style="left:450px;top:38px;width:682px;height:641px;border:1px solid #3a3a3a"></div><div class="a" style="left:451px;top:39px;width:680px;height:639px;background:#414141;border:1px solid #525252"></div><div class="a" style="left:1133px;top:40px;width:1px;height:638px;background:#4a4a4a"></div>
<svg class="a" style="left:469px;top:62px;" width="32" height="22" viewBox="0 0 32 22"><path d="M0.5 0.5 H26.5 L31.5 5.5 V21.5 H0.5 Z" fill="#f2f2f2"/><path d="M26 0.5 L26.5 5 L31 5.5" fill="none" stroke="#555" stroke-width="0.8"/><rect x="3.5" y="4" width="25" height="14.5" fill="none" stroke="#7a7a7a" stroke-width="0.9"/><path d="M6 7.5 H22 M3.5 10.5 H21.5 M15.5 7.5 V15.5 H22 M5.5 14 H7.5 V16.5 H11 V18" fill="none" stroke="#7a7a7a" stroke-width="0.9"/><circle cx="8" cy="10.5" r="1.3" fill="#f2f2f2" stroke="#7a7a7a" stroke-width="0.8"/><rect x="22" y="6" width="2.5" height="3" fill="none" stroke="#7a7a7a" stroke-width="0.8"/><rect x="23.5" y="10.5" width="2.5" height="3" fill="none" stroke="#7a7a7a" stroke-width="0.8"/><path d="M22.5 14 V21.5 M22.5 17.5 H31.5 M22.5 14 H31.5" fill="none" stroke="#8a8a8a" stroke-width="0.8"/><path d="M28 5 V13" stroke="#888" stroke-width="0.8"/></svg>
<div class="t" style="left:510px;top:64px;font-size:12.7px;color:#eeeeee">Schematic – Grids</div>
<div class="sec" style="top:107px"></div><div class="sect" style="top:110px">栅格选项</div>
<div class="t" style="left:477px;top:142px;font-size:13px;color:#e6e6e6">栅格</div>
<div class="a" style="left:573px;top:140px;width:141px;height:21px;background:linear-gradient(#58616b,#4c4f53 40%,#4a4a4a);border:1px solid #bccde0;border-radius:3px"></div>
<div class="t" style="left:579px;top:143px;font-size:11.3px;color:#f0f0f0">Line Grid</div>
<div class="a" style="left:700px;top:148px;width:0;height:0;border-left:4px solid transparent;border-right:4px solid transparent;border-top:5px solid #f0f0f0"></div>
<div class="t" style="left:757px;top:142px;font-size:13px;color:#e6e6e6">栅格颜色</div>
<div class="a" style="left:846px;top:140px;width:23px;height:24px;background:#3a3a3a;border:1px solid #2a2a2a;border-radius:3px"></div>
<div class="a" style="left:849px;top:143px;width:17px;height:18px;background:#bdbdbd;border:1px solid #8a8a8a"></div>
<div class="sec" style="top:180px;height:22px"></div><div class="sect" style="top:182px">英制栅格预设</div>
<div class="btn" style="top:228px">Altium预设</div>
<div class="tbl" style="top:212px"></div>
<div class="a" style="left:574px;top:213px;width:532px;height:17px;background:#444;border-bottom:1px solid #262626"></div>
<div class="a" style="left:601px;top:217px;width:1px;height:11px;background:#222"></div>
<div class="a" style="left:771px;top:217px;width:1px;height:11px;background:#222"></div>
<div class="a" style="left:800px;top:217px;width:1px;height:11px;background:#222"></div>
<div class="a" style="left:938px;top:217px;width:1px;height:11px;background:#222"></div>
<div class="a" style="left:967px;top:217px;width:1px;height:11px;background:#222"></div>
<div class="hd" style="left:603px;top:214px">捕捉栅格</div>
<div class="hd" style="left:802px;top:214px">捕捉距离</div>
<div class="hd" style="left:969px;top:215px;font-size:11.5px">Visible Grid</div>
<div class="a" style="left:574px;top:231px;width:532px;height:16px;background:#5e86ad"></div>
<div class="cb" style="left:580px;top:231px"></div>
<div class="a" style="left:584px;top:235px;width:7px;height:4px;border-left:1px solid #e8e8e8;border-bottom:1px solid #e8e8e8;transform:rotate(-45deg)"></div>
<div class="cell" style="left:604px;top:232px">10mil</div>
<div class="cb" style="left:778px;top:231px"></div>
<div class="a" style="left:782px;top:235px;width:7px;height:4px;border-left:1px solid #e8e8e8;border-bottom:1px solid #e8e8e8;transform:rotate(-45deg)"></div>
<div class="cell" style="left:802px;top:232px">40mil</div>
<div class="cb" style="left:945px;top:231px"></div>
<div class="a" style="left:949px;top:235px;width:7px;height:4px;border-left:1px solid #e8e8e8;border-bottom:1px solid #e8e8e8;transform:rotate(-45deg)"></div>
<div class="cell" style="left:969px;top:232px">100mil</div>
<div class="cb" style="left:580px;top:247px"></div>
<div class="a" style="left:584px;top:251px;width:7px;height:4px;border-left:1px solid #e8e8e8;border-bottom:1px solid #e8e8e8;transform:rotate(-45deg)"></div>
<div class="cell" style="left:604px;top:248px">50mil</div>
<div class="cb" style="left:778px;top:247px"></div>
<div class="a" style="left:782px;top:251px;width:7px;height:4px;border-left:1px solid #e8e8e8;border-bottom:1px solid #e8e8e8;transform:rotate(-45deg)"></div>
<div class="cell" style="left:802px;top:248px">30mil</div>
<div class="cb" style="left:945px;top:247px"></div>
<div class="a" style="left:949px;top:251px;width:7px;height:4px;border-left:1px solid #e8e8e8;border-bottom:1px solid #e8e8e8;transform:rotate(-45deg)"></div>
<div class="cell" style="left:969px;top:248px">100mil</div>
<div class="cb" style="left:580px;top:263px"></div>
<div class="a" style="left:584px;top:267px;width:7px;height:4px;border-left:1px solid #e8e8e8;border-bottom:1px solid #e8e8e8;transform:rotate(-45deg)"></div>
<div class="cell" style="left:604px;top:264px">100mil</div>
<div class="cb" style="left:778px;top:263px"></div>
<div class="a" style="left:782px;top:267px;width:7px;height:4px;border-left:1px solid #e8e8e8;border-bottom:1px solid #e8e8e8;transform:rotate(-45deg)"></div>
<div class="cell" style="left:802px;top:264px">40mil</div>
<div class="cb" style="left:945px;top:263px"></div>
<div class="a" style="left:949px;top:267px;width:7px;height:4px;border-left:1px solid #e8e8e8;border-bottom:1px solid #e8e8e8;transform:rotate(-45deg)"></div>
<div class="cell" style="left:969px;top:264px">100mil</div>
<div class="sec" style="top:332px"></div><div class="sect" style="top:334px">公制栅格预设</div>
<div class="btn" style="top:380px">Altium预设</div>
<div class="tbl" style="top:364px"></div>
<div class="a" style="left:574px;top:365px;width:532px;height:17px;background:#444;border-bottom:1px solid #262626"></div>
<div class="a" style="left:601px;top:369px;width:1px;height:11px;background:#222"></div>
<div class="a" style="left:771px;top:369px;width:1px;height:11px;background:#222"></div>
<div class="a" style="left:800px;top:369px;width:1px;height:11px;background:#222"></div>
<div class="a" style="left:938px;top:369px;width:1px;height:11px;background:#222"></div>
<div class="a" style="left:967px;top:369px;width:1px;height:11px;background:#222"></div>
<div class="hd" style="left:603px;top:366px">捕捉栅格</div>
<div class="hd" style="left:802px;top:366px">捕捉距离</div>
<div class="hd" style="left:969px;top:367px;font-size:11.5px">Visible Grid</div>
<div class="cb" style="left:580px;top:383px"></div>
<div class="a" style="left:584px;top:387px;width:7px;height:4px;border-left:1px solid #e8e8e8;border-bottom:1px solid #e8e8e8;transform:rotate(-45deg)"></div>
<div class="cell" style="left:604px;top:384px">1.27mm</div>
<div class="cb" style="left:778px;top:383px"></div>
<div class="a" style="left:782px;top:387px;width:7px;height:4px;border-left:1px solid #e8e8e8;border-bottom:1px solid #e8e8e8;transform:rotate(-45deg)"></div>
<div class="cell" style="left:802px;top:384px">1.27mm</div>
<div class="cb" style="left:945px;top:383px"></div>
<div class="a" style="left:949px;top:387px;width:7px;height:4px;border-left:1px solid #e8e8e8;border-bottom:1px solid #e8e8e8;transform:rotate(-45deg)"></div>
<div class="cell" style="left:969px;top:384px">1.27mm</div>
<div class="cb" style="left:580px;top:399px"></div>
<div class="a" style="left:584px;top:403px;width:7px;height:4px;border-left:1px solid #e8e8e8;border-bottom:1px solid #e8e8e8;transform:rotate(-45deg)"></div>
<div class="cell" style="left:604px;top:400px">2.54mm</div>
<div class="cb" style="left:778px;top:399px"></div>
<div class="a" style="left:782px;top:403px;width:7px;height:4px;border-left:1px solid #e8e8e8;border-bottom:1px solid #e8e8e8;transform:rotate(-45deg)"></div>
<div class="cell" style="left:802px;top:400px">2.54mm</div>
<div class="cb" style="left:945px;top:399px"></div>
<div class="a" style="left:949px;top:403px;width:7px;height:4px;border-left:1px solid #e8e8e8;border-bottom:1px solid #e8e8e8;transform:rotate(-45deg)"></div>
<div class="cell" style="left:969px;top:400px">2.54mm</div>
<div class="a" style="left:574px;top:415px;width:532px;height:16px;background:#5e86ad"></div>
<div class="cb" style="left:580px;top:415px"></div>
<div class="a" style="left:584px;top:419px;width:7px;height:4px;border-left:1px solid #e8e8e8;border-bottom:1px solid #e8e8e8;transform:rotate(-45deg)"></div>
<div class="cell" style="left:604px;top:416px">5.08mm</div>
<div class="cb" style="left:778px;top:415px"></div>
<div class="a" style="left:782px;top:419px;width:7px;height:4px;border-left:1px solid #e8e8e8;border-bottom:1px solid #e8e8e8;transform:rotate(-45deg)"></div>
<div class="cell" style="left:802px;top:416px">5.08mm</div>
<div class="cb" style="left:945px;top:415px"></div>
<div class="a" style="left:949px;top:419px;width:7px;height:4px;border-left:1px solid #e8e8e8;border-bottom:1px solid #e8e8e8;transform:rotate(-45deg)"></div>
<div class="cell" style="left:969px;top:416px">5.08mm</div>
</body></html>
